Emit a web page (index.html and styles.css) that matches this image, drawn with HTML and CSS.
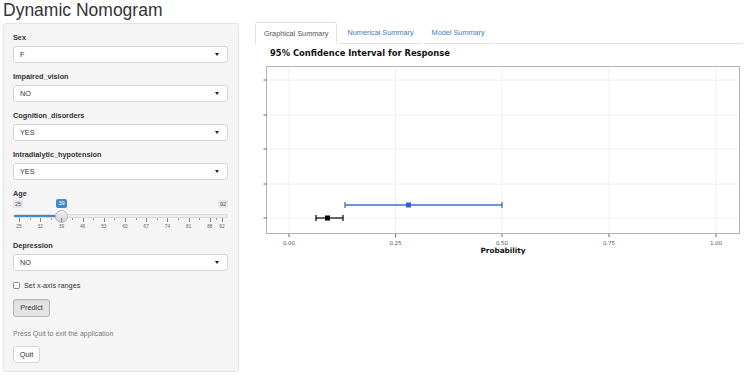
FILE: index.html
```html
<!DOCTYPE html>
<html>
<head>
<meta charset="utf-8">
<link rel="stylesheet" href="styles.css">
</head>
<body>
<h1 class="title">Dynamic Nomogram</h1>
<div class="layout">
  <div class="sidebar">
    <div class="group">
      <label class="lbl">Sex</label>
      <div class="select"><span>F</span><span class="caret"></span></div>
    </div>
    <div class="group">
      <label class="lbl">Impaired_vision</label>
      <div class="select"><span>NO</span><span class="caret"></span></div>
    </div>
    <div class="group">
      <label class="lbl">Cognition_disorders</label>
      <div class="select"><span>YES</span><span class="caret"></span></div>
    </div>
    <div class="group">
      <label class="lbl">Intradialytic_hypotension</label>
      <div class="select"><span>YES</span><span class="caret"></span></div>
    </div>
    <div class="group">
      <label class="lbl">Age</label>
      <div class="slider">
        <span class="s-min">25</span>
        <span class="s-val">39</span>
        <span class="s-max">92</span>
        <div class="track"><div class="fill"></div></div>
        <div class="handle"></div>
        <div class="ticks">
          <i class="mj" style="left:0%"></i><i style="left:5.22%"></i>
          <i class="mj" style="left:10.45%"></i><i style="left:15.67%"></i>
          <i class="mj" style="left:20.9%"></i><i style="left:26.1%"></i>
          <i class="mj" style="left:31.34%"></i><i style="left:36.57%"></i>
          <i class="mj" style="left:41.8%"></i><i style="left:47%"></i>
          <i class="mj" style="left:52.24%"></i><i style="left:57.46%"></i>
          <i class="mj" style="left:62.69%"></i><i style="left:67.9%"></i>
          <i class="mj" style="left:73.13%"></i><i style="left:78.36%"></i>
          <i class="mj" style="left:83.58%"></i><i style="left:88.8%"></i>
          <i class="mj" style="left:94.03%"></i><i style="left:97%"></i>
          <i class="mj" style="left:100%"></i>
        </div>
        <div class="tlabels">
          <span style="left:0%">25</span><span style="left:10.45%">32</span>
          <span style="left:20.9%">39</span><span style="left:31.34%">46</span>
          <span style="left:41.8%">53</span><span style="left:52.24%">60</span>
          <span style="left:62.69%">67</span><span style="left:73.13%">74</span>
          <span style="left:83.58%">81</span><span style="left:94.03%">88</span>
          <span style="left:100%">92</span>
        </div>
      </div>
    </div>
    <div class="group">
      <label class="lbl">Depression</label>
      <div class="select"><span>NO</span><span class="caret"></span></div>
    </div>
    <div class="check"><span class="box"></span><span>Set x-axis ranges</span></div>
    <div><button class="btn btn-predict">Predict</button></div>
    <p class="help">Press Quit to exit the application</p>
    <div><button class="btn btn-quit">Quit</button></div>
  </div>
  <div class="main">
    <div class="tabs">
      <div class="tab active">Graphical Summary</div>
      <div class="tab">Numerical Summary</div>
      <div class="tab">Model Summary</div>
      <div class="tab-rest"></div>
    </div>
    <svg class="plot" width="490" height="220" viewBox="0 0 490 220">
      <text x="15" y="12" class="ptitle">95% Confidence Interval for Response</text>
      <rect x="11.5" y="22.5" width="473" height="167" fill="#fff" stroke="#b3b3b3" stroke-width="1"/>
      <g stroke="#ececec" stroke-width="0.8">
        <line x1="34" y1="23" x2="34" y2="189"/>
        <line x1="140.5" y1="23" x2="140.5" y2="189"/>
        <line x1="247" y1="23" x2="247" y2="189"/>
        <line x1="354" y1="23" x2="354" y2="189"/>
        <line x1="461" y1="23" x2="461" y2="189"/>
        <line x1="12" y1="36" x2="484" y2="36"/>
        <line x1="12" y1="71" x2="484" y2="71"/>
        <line x1="12" y1="105" x2="484" y2="105"/>
        <line x1="12" y1="140" x2="484" y2="140"/>
        <line x1="12" y1="174" x2="484" y2="174"/>
      </g>
      <g stroke="#444" stroke-width="0.8">
        <line x1="8.5" y1="36" x2="11.5" y2="36"/>
        <line x1="8.5" y1="71" x2="11.5" y2="71"/>
        <line x1="8.5" y1="105" x2="11.5" y2="105"/>
        <line x1="8.5" y1="140" x2="11.5" y2="140"/>
        <line x1="8.5" y1="174" x2="11.5" y2="174"/>
        <line x1="34" y1="190" x2="34" y2="193"/>
        <line x1="140.5" y1="190" x2="140.5" y2="193"/>
        <line x1="247" y1="190" x2="247" y2="193"/>
        <line x1="354" y1="190" x2="354" y2="193"/>
        <line x1="461" y1="190" x2="461" y2="193"/>
      </g>
      <g stroke="#3d6fd1" stroke-width="1.3">
        <line x1="90" y1="161" x2="247" y2="161"/>
        <line x1="90" y1="158" x2="90" y2="164"/>
        <line x1="247" y1="158" x2="247" y2="164"/>
      </g>
      <rect x="151" y="158.5" width="5" height="5" fill="#2f63c7"/>
      <g stroke="#111" stroke-width="1.3">
        <line x1="61" y1="174" x2="88" y2="174"/>
        <line x1="61" y1="171" x2="61" y2="177"/>
        <line x1="88" y1="171" x2="88" y2="177"/>
      </g>
      <rect x="70" y="171.5" width="5" height="5" fill="#000"/>
      <g class="tick-lbl">
        <text x="34" y="201" text-anchor="middle">0.00</text>
        <text x="140.5" y="201" text-anchor="middle">0.25</text>
        <text x="247" y="201" text-anchor="middle">0.50</text>
        <text x="354" y="201" text-anchor="middle">0.75</text>
        <text x="461" y="201" text-anchor="middle">1.00</text>
      </g>
      <text x="248" y="209" text-anchor="middle" class="xlab">Probability</text>
    </svg>
  </div>
</div>
</body>
</html>
```

FILE: styles.css
```css
* { box-sizing: border-box; }
body {
  margin: 0;
  background: #fff;
  font-family: "Liberation Sans", Arial, sans-serif;
  color: #333;
}
.title {
  margin: 0;
  padding: 0 0 0 3px;
  height: 23px;
  font-size: 17.5px;
  font-weight: normal;
  line-height: 20px;
  color: #333;
}
.layout {
  display: flex;
  align-items: flex-start;
}
.sidebar {
  margin-left: 3px;
  width: 236px;
  height: 349px;
  background: #f5f5f5;
  border: 1px solid #e3e3e3;
  border-radius: 3px;
  padding: 9px 10px 0 9px;
  display: flex;
  flex-direction: column;
}
.group {
  display: flex;
  flex-direction: column;
  margin-bottom: 9px;
}
.lbl {
  font-size: 7.3px;
  font-weight: bold;
  line-height: 10px;
  height: 10px;
  margin-bottom: 3px;
  color: #333;
}
.select {
  height: 17px;
  background: #fff;
  border: 1px solid #d4d4d4;
  border-radius: 3px;
  display: flex;
  align-items: center;
  justify-content: space-between;
  padding: 0 8px 0 6px;
  font-size: 7.3px;
  color: #333;
}
.caret {
  width: 0;
  height: 0;
  border-left: 2.5px solid transparent;
  border-right: 2.5px solid transparent;
  border-top: 3px solid #222;
}
.slider {
  position: relative;
  height: 33px;
  margin-top: -3px;
}
.s-min, .s-max, .s-val {
  position: absolute;
  top: 1px;
  font-size: 5.5px;
  line-height: 8px;
  height: 8px;
  padding: 0 2px;
  border-radius: 2px;
  background: #e5e5e5;
  color: #555;
}
.s-min { left: 0; }
.s-max { right: 0; }
.s-val {
  left: 43px;
  background: #428bca;
  color: #fff;
  top: 0;
  height: 9px;
  line-height: 9px;
  padding: 0 2.5px;
}
.track {
  position: absolute;
  left: 0;
  right: 0;
  top: 15px;
  height: 4px;
  border-radius: 2px;
  background: #ececec;
  border: 1px solid #dcdcdc;
  overflow: hidden;
}
.fill {
  width: 48px;
  height: 100%;
  background: #428bca;
}
.handle {
  position: absolute;
  left: 42px;
  top: 10.5px;
  width: 13px;
  height: 13px;
  border-radius: 50%;
  background: linear-gradient(#f2f2f2, #d0d0d0);
  border: 1px solid #b8b8b8;
}
.ticks {
  position: absolute;
  left: 6px;
  right: 6px;
  top: 19px;
  height: 5px;
}
.ticks i {
  position: absolute;
  top: 0;
  width: 1px;
  height: 2px;
  background: #999;
}
.ticks i.mj {
  height: 4px;
  background: #888;
}
.tlabels {
  position: absolute;
  left: 6px;
  right: 6px;
  top: 24px;
  height: 7px;
}
.tlabels span {
  position: absolute;
  transform: translateX(-50%);
  font-size: 4.8px;
  line-height: 7px;
  color: #666;
}
.check {
  display: flex;
  align-items: center;
  gap: 4px;
  height: 10px;
  margin-bottom: 6px;
  font-size: 7.3px;
  color: #333;
}
.box {
  width: 7px;
  height: 7px;
  border: 1px solid #888;
  border-radius: 1.5px;
  background: #fff;
}
.btn {
  font-family: "Liberation Sans", Arial, sans-serif;
  font-size: 7.3px;
  color: #333;
  border-radius: 3px;
  padding: 0;
  height: 18px;
}
.btn-predict {
  width: 37px;
  background: #e4e4e4;
  border: 1px solid #b5b5b5;
  box-shadow: inset 0 1px 2px rgba(0,0,0,0.08);
}
.help {
  margin: 12px 0 0 0;
  height: 10px;
  line-height: 10px;
  font-size: 7px;
  color: #7a7a7a;
}
.btn-quit {
  margin-top: 7px;
  width: 27px;
  height: 17px;
  background: #fff;
  border: 1px solid #d4d4d4;
}
.main {
  margin-left: 16px;
  flex: 1;
  margin-top: -1px;
}
.tabs {
  display: flex;
  align-items: flex-end;
  height: 22px;
}
.tab {
  height: 22px;
  padding: 0 8px;
  margin-right: 2px;
  font-size: 7.3px;
  line-height: 21px;
  color: #3d7cc4;
  border-bottom: 1px solid #e2e2e2;
}
.tab.active {
  color: #555;
  background: #fff;
  border: 1px solid #e2e2e2;
  border-bottom-color: #fff;
  border-radius: 3px 3px 0 0;
}
.tab-rest {
  flex: 1;
  margin-right: 2px;
  border-bottom: 1px solid #e2e2e2;
}
.plot {
  display: block;
}
.ptitle {
  font-family: "DejaVu Sans", sans-serif;
  font-weight: bold;
  font-size: 8.4px;
  fill: #111;
}
.tick-lbl text {
  font-family: "DejaVu Sans", sans-serif;
  font-size: 5.5px;
  fill: #555;
}
.xlab {
  font-family: "DejaVu Sans", sans-serif;
  font-weight: bold;
  font-size: 7.3px;
  fill: #111;
}
```
